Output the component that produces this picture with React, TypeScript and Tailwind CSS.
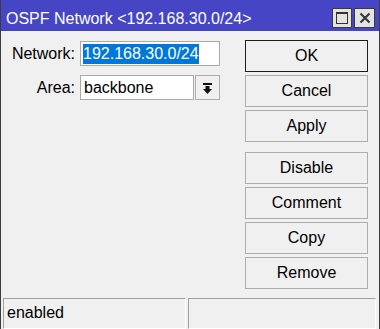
import React from "react";

function Btn({ label, primary }: { label: string; primary?: boolean }) {
  return (
    <div
      className={
        "h-[32px] w-[123px] border bg-[#f0f0f0] flex items-center justify-center text-[16px] leading-[18px] text-black " +
        (primary ? "border-[#1e1e1e]" : "border-[#adadad]")
      }
    >
      {label}
    </div>
  );
}

export default function App() {
  return (
    <div className="w-[380px] h-[329px] bg-[#f0f0f0] border-x border-[#3c3c3c] flex flex-col overflow-hidden font-['Liberation_Sans',Arial,sans-serif] text-black">
      {/* Title bar */}
      <div className="h-[31px] shrink-0 bg-[#4545c5] flex items-start pl-[5px] pr-[4px]">
        <div className="flex-1 pt-[10px] text-white text-[16px] leading-[18px] whitespace-nowrap">
          OSPF Network &lt;192.168.30.0/24&gt;
        </div>
        <div className="mt-[8px] flex gap-[2px]">
          <div className="w-[20px] h-[20px] border border-[#3a3a3a] bg-[#e3e3e3] flex items-center justify-center">
            <svg width="18" height="18" viewBox="0 0 18 18">
              <rect x="3.5" y="3.5" width="11" height="11" fill="none" stroke="#333" strokeWidth="1" />
              <rect x="3" y="3" width="12" height="2" fill="#333" />
            </svg>
          </div>
          <div className="w-[21px] h-[20px] border border-[#3a3a3a] bg-[#e3e3e3] flex items-center justify-center">
            <svg width="18" height="18" viewBox="0 0 18 18">
              <path d="M4.5 4.5 L13.5 13.5 M13.5 4.5 L4.5 13.5" stroke="#333" strokeWidth="2" />
            </svg>
          </div>
        </div>
      </div>

      {/* Body */}
      <div className="flex-1 flex pt-[9px]">
        <div className="w-[244px] pt-[1px] flex flex-col gap-[9px]">
          <div className="h-[25px] flex items-center">
            <div className="w-[74px] text-right text-[16px] leading-[18px]">Network:</div>
            <div className="ml-[5px] w-[140px] h-[25px] border border-[#a9a9a9] bg-white flex items-center pl-[2px]">
              <span className="bg-[#0078d7] text-white text-[16px] leading-[20px] h-[20px] whitespace-nowrap">
                192.168.30.0/24
              </span>
            </div>
          </div>
          <div className="h-[25px] flex items-center">
            <div className="w-[74px] text-right text-[16px] leading-[18px]">Area:</div>
            <div className="ml-[5px] w-[114px] h-[25px] border border-[#a9a9a9] bg-white flex items-center pl-[3px] text-[16px] leading-[18px]">
              backbone
            </div>
            <div className="ml-[1px] w-[25px] h-[25px] border border-[#adadad] bg-[#f0f0f0] flex items-center justify-center">
              <svg width="23" height="23" viewBox="0 0 23 23">
                <rect x="7" y="7" width="9" height="2" fill="#111" />
                <path d="M9.5 10 H13.5 V13 H16 L11.5 18 L7 13 H9.5 Z" fill="#111" />
              </svg>
            </div>
          </div>
        </div>
        <div className="w-[123px] flex flex-col">
          <div className="flex flex-col gap-[3px]">
            <Btn label="OK" primary />
            <Btn label="Cancel" />
            <Btn label="Apply" />
          </div>
          <div className="mt-[10px] flex flex-col gap-[3px]">
            <Btn label="Disable" />
            <Btn label="Comment" />
            <Btn label="Copy" />
            <Btn label="Remove" />
          </div>
        </div>
      </div>

      {/* Status bar */}
      <div className="h-[31px] shrink-0 flex gap-[2px] pl-[2px]">
        <div className="w-[183px] h-full border border-t-[#a0a0a0] border-l-[#a0a0a0] border-r-white border-b-white pl-[3px] pt-[5px] text-[16px] leading-[18px]">
          enabled
        </div>
        <div className="w-[188px] h-full border border-t-[#a0a0a0] border-l-[#a0a0a0] border-r-white border-b-white" />
      </div>
    </div>
  );
}
